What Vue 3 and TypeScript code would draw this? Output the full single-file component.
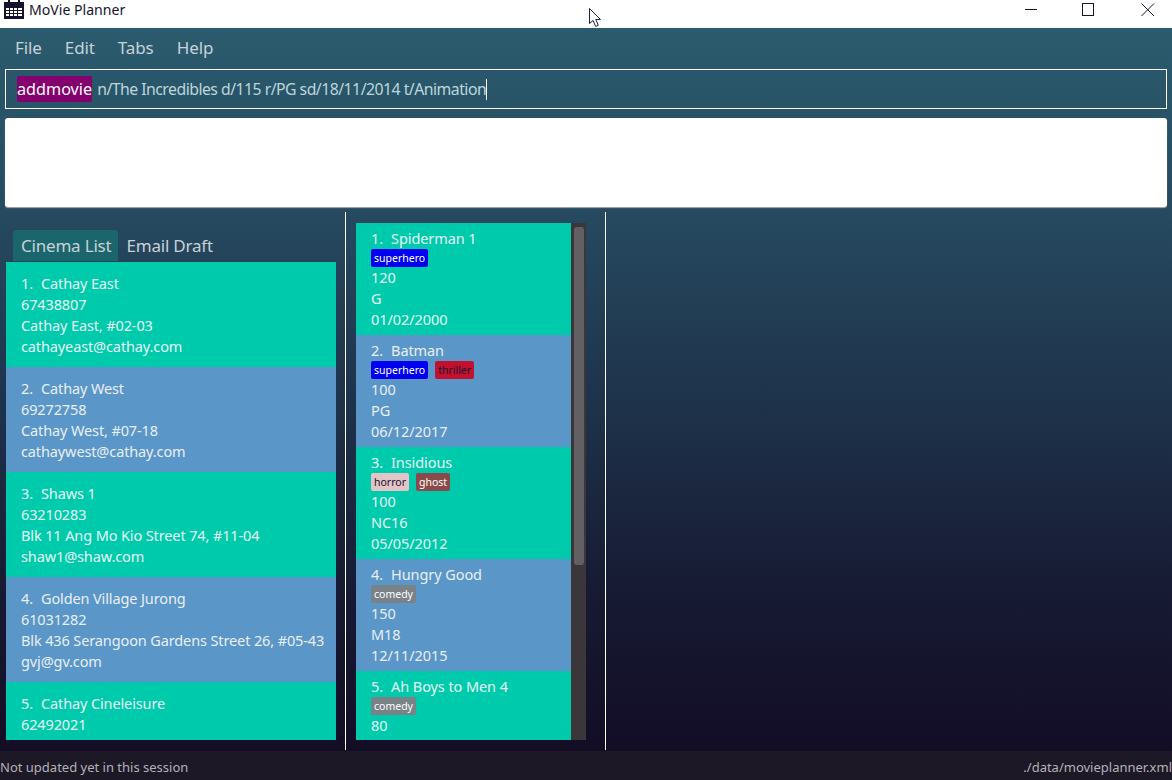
<script setup lang="ts">
interface Cinema { name: string; phone: string; address?: string; email?: string }
interface Tag { label: string; kind: string }
interface Movie { name: string; tags: Tag[]; duration: string; rating?: string; date?: string }

const menus: string[] = ['File', 'Edit', 'Tabs', 'Help']

const cinemas: Cinema[] = [
  { name: 'Cathay East', phone: '67438807', address: 'Cathay East, #02-03', email: 'cathayeast@cathay.com' },
  { name: 'Cathay West', phone: '69272758', address: 'Cathay West, #07-18', email: 'cathaywest@cathay.com' },
  { name: 'Shaws 1', phone: '63210283', address: 'Blk 11 Ang Mo Kio Street 74, #11-04', email: 'shaw1@shaw.com' },
  { name: 'Golden Village Jurong', phone: '61031282', address: 'Blk 436 Serangoon Gardens Street 26, #05-43', email: 'gvj@gv.com' },
  { name: 'Cathay Cineleisure', phone: '62492021' }
]

const movies: Movie[] = [
  { name: 'Spiderman 1', tags: [{ label: 'superhero', kind: 'blue' }], duration: '120', rating: 'G', date: '01/02/2000' },
  { name: 'Batman', tags: [{ label: 'superhero', kind: 'blue' }, { label: 'thriller', kind: 'crimson' }], duration: '100', rating: 'PG', date: '06/12/2017' },
  { name: 'Insidious', tags: [{ label: 'horror', kind: 'pink' }, { label: 'ghost', kind: 'brown' }], duration: '100', rating: 'NC16', date: '05/05/2012' },
  { name: 'Hungry Good', tags: [{ label: 'comedy', kind: 'grey' }], duration: '150', rating: 'M18', date: '12/11/2015' },
  { name: 'Ah Boys to Men 4', tags: [{ label: 'comedy', kind: 'grey' }], duration: '80' }
]
</script>

<template>
  <div class="window">
    <header class="titlebar">
      <div class="title-left">
        <svg class="app-icon" width="20" height="20" viewBox="0 0 20 20">
          <path fill="#14142c" d="M4 0h2v2H4zM14 0h2v2h-2zM0 2h20v17H0z" />
          <g fill="#fff">
            <rect x="2" y="8" width="3" height="2" /><rect x="6" y="8" width="3" height="2" /><rect x="10" y="8" width="3" height="2" /><rect x="14" y="8" width="4" height="2" />
            <rect x="2" y="11" width="3" height="2" /><rect x="6" y="11" width="3" height="2" /><rect x="10" y="11" width="3" height="2" /><rect x="14" y="11" width="4" height="2" />
            <rect x="2" y="14" width="3" height="2" /><rect x="6" y="14" width="3" height="2" /><rect x="10" y="14" width="3" height="2" /><rect x="14" y="14" width="4" height="2" />
          </g>
        </svg>
        <span class="app-title">MoVie Planner</span>
      </div>
      <div class="win-controls">
        <svg class="win-min" width="12" height="14" viewBox="0 0 12 14"><path d="M0 6.5h12" stroke="#14142c" fill="none" /></svg>
        <svg width="13" height="14" viewBox="0 0 13 14"><rect x=".5" y=".5" width="11" height="12" stroke="#14142c" fill="none" /></svg>
        <svg width="14" height="14" viewBox="0 0 14 14"><path d="M.5.5l12.5 12.5M13 .5L.5 13" stroke="#14142c" fill="none" /></svg>
      </div>
    </header>

    <main class="body">
      <nav class="menubar">
        <span v-for="m in menus" :key="m" class="menu-item">{{ m }}</span>
      </nav>

      <div class="command">
        <span class="cmd-word">addmovie</span><span class="cmd-rest">n/The Incredibles d/115 r/PG sd/18/11/2014 t/Animation</span><span class="caret"></span>
      </div>

      <div class="result"></div>

      <section class="split">
        <div class="pane left-pane">
          <div class="tabs">
            <span class="tab active">Cinema List</span>
            <span class="tab">Email Draft</span>
          </div>
          <div class="cinema-list">
            <article v-for="(c, i) in cinemas" :key="c.name" class="cinema" :class="i % 2 ? 'alt' : 'main'">
              <div><span class="idx">{{ i + 1 }}.</span>{{ c.name }}</div>
              <div>{{ c.phone }}</div>
              <div v-if="c.address">{{ c.address }}</div>
              <div v-if="c.email">{{ c.email }}</div>
            </article>
          </div>
        </div>

        <div class="pane mid-pane">
          <div class="movie-scroll">
            <div class="movie-list">
              <article v-for="(m, i) in movies" :key="m.name" class="movie" :class="i % 2 ? 'alt' : 'main'">
                <div class="movie-name"><span class="idx">{{ i + 1 }}.</span>{{ m.name }}</div>
                <div class="tags">
                  <span v-for="t in m.tags" :key="t.label" class="tag" :class="t.kind">{{ t.label }}</span>
                </div>
                <div class="line">{{ m.duration }}</div>
                <div v-if="m.rating" class="line">{{ m.rating }}</div>
                <div v-if="m.date" class="line">{{ m.date }}</div>
              </article>
            </div>
            <div class="scrollbar"><div class="thumb"></div></div>
          </div>
        </div>

        <div class="pane right-pane"></div>
      </section>
    </main>

    <footer class="status">
      <span>Not updated yet in this session</span>
      <span>./data/movieplanner.xml</span>
    </footer>

    <svg class="pointer" width="14" height="20" viewBox="0 0 14 20">
      <path d="M.5.5v15l3.6-3 2.6 6 2.6-1.2-2.5-5.8h4.7z" fill="#fff" stroke="#1b2440" stroke-width="1" />
    </svg>
  </div>
</template>

<style>
html, body { margin: 0; padding: 0; }
</style>

<style scoped>
.window {
  position: relative;
  width: 1172px;
  height: 780px;
  overflow: hidden;
  display: flex;
  flex-direction: column;
  font-family: "Noto Sans", "Open Sans", sans-serif;
  background: #fff;
}
.titlebar {
  height: 28px;
  flex: none;
  display: flex;
  justify-content: space-between;
  background: #fff;
  color: #14142c;
}
.title-left { display: flex; align-items: flex-start; }
.app-icon { margin: 0 0 0 4px; }
.app-title { margin: 0 0 0 5px; font-size: 14.1px; line-height: 19px; }
.win-controls { display: flex; align-items: flex-start; padding: 3px 17px 0 0; gap: 46px; }
.win-min { margin-right: -1px; }
.body {
  flex: 1;
  min-height: 0;
  display: flex;
  flex-direction: column;
  background: linear-gradient(180deg, #2b5b6e 0%, #264a60 25%, #1d3048 55%, #171a33 78%, #130d26 100%);
}
.menubar {
  height: 41px;
  flex: none;
  display: flex;
  align-items: center;
  padding: 0 0 2px 15px;
  box-sizing: border-box;
  gap: 23px;
  color: #c6d2da;
  font-size: 17px;
  letter-spacing: -0.1px;
}
.command {
  flex: none;
  height: 40px;
  margin: 0 5px;
  box-sizing: border-box;
  border: 1px solid #fff;
  padding: 0 0 0 11px;
  display: flex;
  align-items: center;
  white-space: pre;
  color: #bcd6dc;
}
.cmd-word { background: #85006f; color: #fff; border-radius: 2px; font-size: 16.2px; line-height: 26px; height: 26px; }
.cmd-rest { margin-left: 5px; font-size: 15.8px; letter-spacing: -0.52px; }
.caret { width: 1px; height: 21px; background: #fff; }
.result {
  flex: none;
  height: 89px;
  margin: 9px 5px 0;
  background: #fff;
  border-radius: 3px;
  box-shadow: 0 1px 1px #aaa;
}
.split {
  flex: 1;
  min-height: 0;
  display: grid;
  grid-template-columns: 346px 260px 1fr;
  margin-top: 5px;
  padding-bottom: 1px;
}
.pane { min-height: 0; box-sizing: border-box; }
.left-pane {
  border-right: 1px solid #fff;
  display: flex;
  flex-direction: column;
  padding: 18px 9px 10px 6px;
}
.tabs { flex: none; display: flex; height: 32px; padding-left: 7px; color: #c8d1d8; font-size: 17px; letter-spacing: -0.2px; }
.tab { padding: 0 7px 0 8px; line-height: 31px; height: 31px; }
.tab.active { background: #1b666c; border-radius: 3px 3px 0 0; }
.cinema-list { flex: 1; min-height: 0; overflow: hidden; }
.cinema {
  height: 105px;
  box-sizing: border-box;
  padding: 11px 0 0 15px;
  font-size: 14.5px;
  line-height: 21px;
  letter-spacing: -0.12px;
  white-space: nowrap;
}
.main { background: #00caac; color: #e6f7f3; }
.alt { background: #5b96c8; color: #e8eff6; }
.idx { margin-right: 8px; }
.mid-pane {
  border-right: 1px solid #fff;
  padding: 11px 0 10px 10px;
}
.movie-scroll { height: 100%; display: flex; width: 230px; overflow: hidden; }
.movie-list { width: 215px; flex: none; overflow: hidden; }
.movie {
  height: 112px;
  box-sizing: border-box;
  padding: 5px 0 0 15px;
  font-size: 14.5px;
  line-height: 21px;
  letter-spacing: -0.08px;
  white-space: nowrap;
}
.movie-name { height: 21px; }
.tags { height: 18px; display: flex; gap: 7px; }
.tag {
  height: 18px;
  line-height: 18px;
  padding: 0 3px;
  font-size: 10.5px;
  letter-spacing: 0;
  border-radius: 2px;
}
.blue { background: #0000f0; color: #fff; }
.crimson { background: #c2102f; color: #1a1030; }
.pink { background: #e3c5c8; color: #1a1030; }
.brown { background: #8a4a4a; color: #fff; }
.grey { background: #788287; color: #fff; }
.scrollbar {
  width: 15px;
  flex: none;
  background: #3a3639;
  padding: 4px 2px 0 3px;
  box-sizing: border-box;
}
.thumb { height: 338px; background: #636064; border-radius: 3px; }
.status {
  height: 29px;
  flex: none;
  display: flex;
  justify-content: space-between;
  align-items: center;
  padding-top: 2px;
  box-sizing: border-box;
  background: #1c1826;
  color: #b4b2b8;
  font-size: 13px;
}
.pointer { position: absolute; left: 589px; top: 8px; }
</style>
